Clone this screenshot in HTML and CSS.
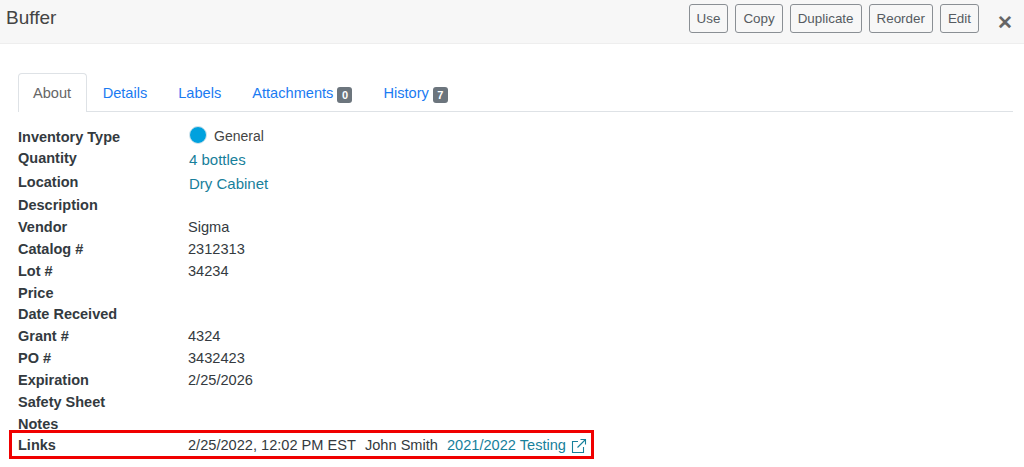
FILE: index.html
```html
<!DOCTYPE html>
<html lang="en">
<head>
<meta charset="utf-8">
<title>Buffer</title>
<link rel="stylesheet" href="styles.css">
</head>
<body>
<header class="modal-header">
  <h1 class="title">Buffer</h1>
  <div class="actions">
    <button class="btn">Use</button>
    <button class="btn">Copy</button>
    <button class="btn">Duplicate</button>
    <button class="btn">Reorder</button>
    <button class="btn">Edit</button>
    <span class="close">&#10005;</span>
  </div>
</header>
<main class="content">
  <nav class="tabs">
    <a class="tab active">About</a>
    <a class="tab">Details</a>
    <a class="tab">Labels</a>
    <a class="tab">Attachments <span class="badge">0</span></a>
    <a class="tab">History <span class="badge">7</span></a>
  </nav>
  <div class="rows">
    <div class="row r-type"><b>Inventory Type</b><span class="general"><i class="dot"></i>General</span></div>
    <div class="row r-qty"><b>Quantity</b><a class="link big">4 bottles</a></div>
    <div class="row r-loc"><b>Location</b><a class="link big">Dry Cabinet</a></div>
    <div class="row r-desc"><b>Description</b><span></span></div>
    <div class="row"><b>Vendor</b><span>Sigma</span></div>
    <div class="row"><b>Catalog #</b><span>2312313</span></div>
    <div class="row"><b>Lot #</b><span>34234</span></div>
    <div class="row"><b>Price</b><span></span></div>
    <div class="row"><b>Date Received</b><span></span></div>
    <div class="row"><b>Grant #</b><span>4324</span></div>
    <div class="row"><b>PO #</b><span>3432423</span></div>
    <div class="row"><b>Expiration</b><span>2/25/2026</span></div>
    <div class="row"><b>Safety Sheet</b><span></span></div>
    <div class="row"><b>Notes</b><span></span></div>
    <div class="row highlighted"><b>Links</b>
      <span class="links-val"><span>2/25/2022, 12:02 PM EST</span><span>John Smith</span>
        <a class="link ext">2021/2022 Testing
          <svg class="ext-icon" viewBox="0 0 16 16" width="16" height="16" fill="none" stroke="currentColor" stroke-width="1.1"><path d="M12.5 9v5.5h-11v-11H7"/><path d="M9.5 1.5h5v5M14.5 1.5L6.5 9.5"/></svg>
        </a>
      </span>
    </div>
  </div>
</main>
</body>
</html>
```
FILE: styles.css
```css
*, *::after { box-sizing: border-box; }
html, body { margin: 0; padding: 0; }
body {
  width: 1024px;
  height: 467px;
  overflow: hidden;
  background: #fff;
  font-family: "Liberation Sans", Arial, sans-serif;
  font-size: 14.6px;
  color: #343a40;
}
.modal-header {
  height: 44px;
  background: #f7f7f7;
  border-bottom: 1px solid #eeeeee;
  display: flex;
  justify-content: space-between;
  align-items: flex-start;
  padding: 0 11px 0 6px;
}
.title {
  margin: 6px 0 0;
  font-size: 19px;
  font-weight: 400;
  line-height: 24px;
  color: #444;
}
.actions {
  display: flex;
  gap: 7px;
  padding-top: 4px;
}
.btn {
  height: 29px;
  padding: 0 7px;
  border: 1px solid #8a8f94;
  border-radius: 3px;
  background: transparent;
  font: 13.4px "Liberation Sans", Arial, sans-serif;
  color: #555b61;
}
.close {
  margin: 8px 0 0 11px;
  font-size: 19px;
  font-weight: 700;
  line-height: 22px;
  color: #666;
}
.content { padding: 29px 0 0 18px; }
.tabs {
  display: flex;
  height: 39px;
  width: 995px;
  border-bottom: 1px solid #dee2e6;
  font-size: 14.6px;
  color: #1a7bf2;
}
.tab {
  height: 38px;
  padding: 11px 15.5px 0;
  line-height: 18px;
  white-space: nowrap;
}
.tab.active {
  height: 39px;
  background: #fff;
  color: #666;
  border: 1px solid #dee2e6;
  border-bottom: 0;
  border-radius: 4px 4px 0 0;
  padding: 10px 15px 0 14px;
}
.badge {
  display: inline-block;
  min-width: 15px;
  height: 16px;
  padding: 0 3px;
  border-radius: 3px;
  background: #6c757d;
  color: #fff;
  font-size: 11px;
  font-weight: 700;
  line-height: 16px;
  text-align: center;
  vertical-align: -1px;
}
.rows { padding-top: 15px; }
.row {
  display: grid;
  grid-template-columns: 170px 1fr;
  height: 21.85px;
  line-height: 21.85px;
  white-space: nowrap;
}
.row b { font-size: 14.5px; font-weight: 700; color: #333a40; }
.r-type { height: 21px; }
.r-qty { height: 24px; }
.r-loc { height: 23px; }
.r-desc { height: 22px; }
.big { font-size: 15px; padding: 1px 0 0 1px; }
.general {
  display: flex;
  align-items: center;
  height: 21px;
  margin-top: -1px;
  padding-left: 1px;
  font-size: 14px;
  color: #444;
}
.link { color: #17809b; }
.dot {
  width: 18px;
  height: 18px;
  margin: -4px 7px 0 0;
  border-radius: 50%;
  background: #00a1de;
  border: 1px solid #d5e5ec;
}
.highlighted { position: relative; }
.highlighted::after {
  content: "";
  position: absolute;
  left: -9px;
  top: -5px;
  width: 585px;
  height: 29px;
  border: 3px solid #f00000;
}
.links-val { display: flex; gap: 9px; }
.ext { display: inline-flex; align-items: center; gap: 5px; }
.ext-icon { flex: none; }
```
